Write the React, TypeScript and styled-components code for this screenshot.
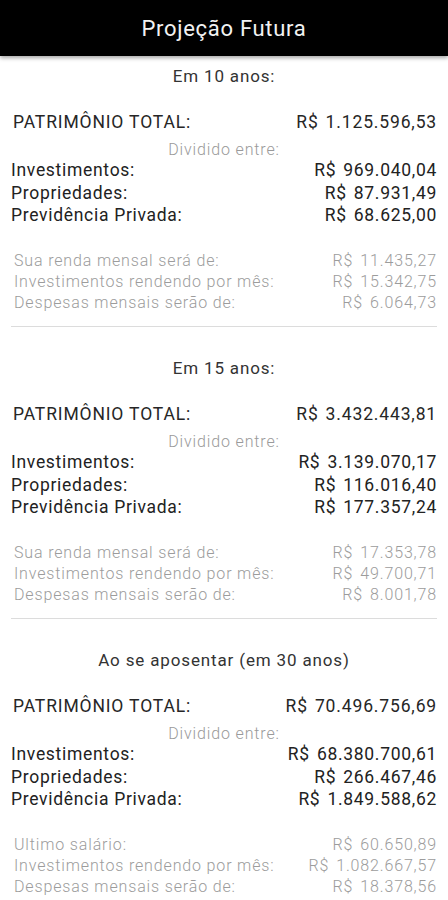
import React from "react";
import styled, { createGlobalStyle } from "styled-components";

const Global = createGlobalStyle`
  html, body { margin: 0; padding: 0; background: #fff; }
  body { font-family: Roboto, "Noto Sans", sans-serif; letter-spacing: 0.85px; }
`;

const Page = styled.div`
  width: 448px;
  min-height: 900px;
  background: #fff;
`;

const Header = styled.header`
  height: 56px;
  background: #000;
  color: #f2f2f2;
  display: flex;
  align-items: center;
  justify-content: center;
  font-size: 22px;
  letter-spacing: 0.7px;
  box-shadow: 0 2px 4px rgba(0, 0, 0, 0.35);
  position: relative;
`;

const Content = styled.main`
  padding: 9px 11px 0 11px;
`;

const Section = styled.section`
  display: flex;
  flex-direction: column;
`;

const SectionTitle = styled.div`
  text-align: center;
  font-size: 17px;
  line-height: 22px;
  color: #333;
  margin-bottom: 23px;
`;

const Row = styled.div<{ $variant: "total" | "main" | "light" }>`
  display: flex;
  justify-content: space-between;
  align-items: center;
  white-space: nowrap;
  ${({ $variant }) =>
    $variant === "total"
      ? `font-size: 17.5px; line-height: 24px; color: #262626; padding-left: 2px;`
      : $variant === "main"
      ? `font-size: 17.5px; line-height: 22.5px; color: #222; letter-spacing: 0.7px;`
      : `font-size: 16px; line-height: 21px; color: #9c9c9c; font-weight: 300; padding-left: 3px;`}
`;

const Currency = styled.span`
  margin-right: 7px;
`;

const Divided = styled.div`
  text-align: center;
  font-size: 16px;
  line-height: 18px;
  color: #9a9a9a;
  font-weight: 300;
  margin-top: 7px;
`;

const LightGroup = styled.div`
  margin-top: 23px;
  display: flex;
  flex-direction: column;
`;

const Divider = styled.hr`
  border: none;
  height: 1px;
  background: #dcdcdc;
  margin: 13px 0 30.5px 0;
`;

type Pair = [string, string];

interface Block {
  title: string;
  total: string;
  main: Pair[];
  light: Pair[];
  last?: boolean;
}

const blocks: Block[] = [
  {
    title: "Em 10 anos:",
    total: "1.125.596,53",
    main: [
      ["Investimentos:", "969.040,04"],
      ["Propriedades:", "87.931,49"],
      ["Previdência Privada:", "68.625,00"],
    ],
    light: [
      ["Sua renda mensal será de:", "11.435,27"],
      ["Investimentos rendendo por mês:", "15.342,75"],
      ["Despesas mensais serão de:", "6.064,73"],
    ],
  },
  {
    title: "Em 15 anos:",
    total: "3.432.443,81",
    main: [
      ["Investimentos:", "3.139.070,17"],
      ["Propriedades:", "116.016,40"],
      ["Previdência Privada:", "177.357,24"],
    ],
    light: [
      ["Sua renda mensal será de:", "17.353,78"],
      ["Investimentos rendendo por mês:", "49.700,71"],
      ["Despesas mensais serão de:", "8.001,78"],
    ],
  },
  {
    title: "Ao se aposentar (em 30 anos)",
    total: "70.496.756,69",
    main: [
      ["Investimentos:", "68.380.700,61"],
      ["Propriedades:", "266.467,46"],
      ["Previdência Privada:", "1.849.588,62"],
    ],
    light: [
      ["Ultimo salário:", "60.650,89"],
      ["Investimentos rendendo por mês:", "1.082.667,57"],
      ["Despesas mensais serão de:", "18.378,56"],
    ],
    last: true,
  },
];

const Money: React.FC<{ value: string }> = ({ value }) => (
  <span>
    <Currency>R$</Currency>
    {value}
  </span>
);

export default function App() {
  return (
    <Page>
      <Global />
      <Header>Projeção Futura</Header>
      <Content>
        {blocks.map((b) => (
          <Section key={b.title}>
            <SectionTitle>{b.title}</SectionTitle>
            <Row $variant="total">
              <span>PATRIMÔNIO TOTAL:</span>
              <Money value={b.total} />
            </Row>
            <Divided>Dividido entre:</Divided>
            {b.main.map(([l, v]) => (
              <Row $variant="main" key={l}>
                <span>{l}</span>
                <Money value={v} />
              </Row>
            ))}
            <LightGroup>
              {b.light.map(([l, v]) => (
                <Row $variant="light" key={l}>
                  <span>{l}</span>
                  <Money value={v} />
                </Row>
              ))}
            </LightGroup>
            {!b.last && <Divider />}
          </Section>
        ))}
      </Content>
    </Page>
  );
}
